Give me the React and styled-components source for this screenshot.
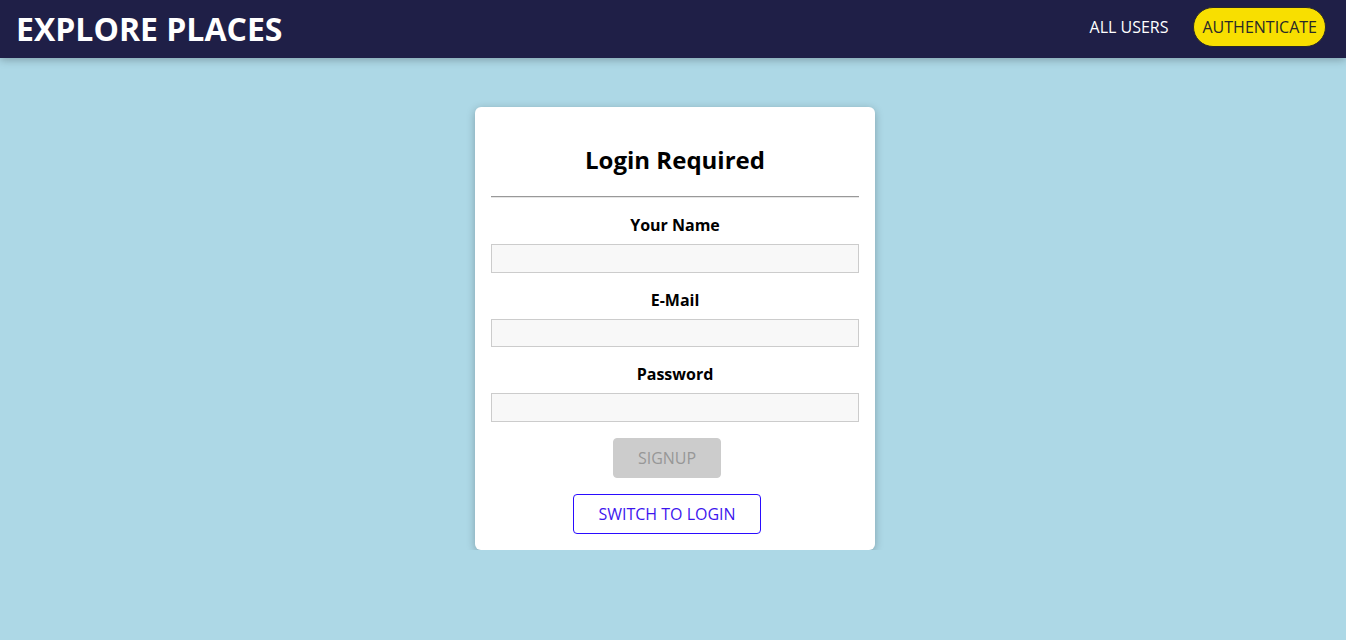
import styled, { createGlobalStyle } from "styled-components"

const GlobalStyle = createGlobalStyle`
  * { box-sizing: border-box; }
  html, body {
    margin: 0;
    font-family: "Open Sans", sans-serif;
    background: #add8e6;
  }
`

export default function App() {
  return (
    <>
      <GlobalStyle />
      <Header>
        <Title>EXPLORE PLACES</Title>
        <NavList>
          <NavItem><NavLink href="#">ALL USERS</NavLink></NavItem>
          <NavItem><NavLink href="#" $active>AUTHENTICATE</NavLink></NavItem>
        </NavList>
      </Header>
      <Main>
        <Card>
          <CardTitle>Login Required</CardTitle>
          <Divider />
          <Form onSubmit={(e) => e.preventDefault()}>
            <Field>
              <Label htmlFor="name">Your Name</Label>
              <Input id="name" type="text" />
            </Field>
            <Field>
              <Label htmlFor="email">E-Mail</Label>
              <Input id="email" type="email" />
            </Field>
            <Field>
              <Label htmlFor="password">Password</Label>
              <Input id="password" type="password" />
            </Field>
            <Button type="submit" disabled>SIGNUP</Button>
          </Form>
          <Button $inverse>SWITCH TO LOGIN</Button>
        </Card>
      </Main>
    </>
  )
}

const Header = styled.header`
  height: 58px;
  display: flex;
  align-items: center;
  justify-content: space-between;
  padding: 0 12px 0 16px;
  background: #1f1f47;
  box-shadow: 0 2px 8px rgba(0, 0, 0, 0.26);
  position: relative;
  z-index: 5;
`
const Title = styled.h1`
  margin: 0;
  color: #fff;
  font-size: 32px;
  font-weight: 700;
  line-height: 1.2;
`
const NavList = styled.ul`
  list-style: none;
  margin: -4px 0 0;
  padding: 0;
  display: flex;
  align-items: center;
`
const NavItem = styled.li`
  margin: 0 8px;
`
const NavLink = styled.a`
  display: block;
  padding: 8px;
  font-size: 16px;
  line-height: 22px;
  text-decoration: none;
  border: 1px solid ${(p) => (p.$active ? "#292929" : "transparent")};
  border-radius: 20px;
  background: ${(p) => (p.$active ? "#f8df00" : "transparent")};
  color: ${(p) => (p.$active ? "#292929" : "#fff")};
`
const Main = styled.main`
  padding: 49px 0 0 4px;
`
const Card = styled.div`
  width: 400px;
  margin: 0 auto;
  padding: 16px;
  background: #fff;
  border-radius: 6px;
  box-shadow: 0 2px 8px rgba(0, 0, 0, 0.26);
  display: flex;
  flex-direction: column;
  align-items: center;
  text-align: center;
`
const CardTitle = styled.h2`
  margin: 20px 0 0;
  font-size: 24px;
  font-weight: 700;
  line-height: 33px;
  color: #000;
`
const Divider = styled.hr`
  width: 100%;
  margin: 20px 0 0;
  border: none;
  border-top: 1px solid #999;
  border-bottom: 1px solid #e6e6e6;
`
const Form = styled.form`
  width: 100%;
  display: flex;
  flex-direction: column;
  align-items: center;
  margin-bottom: 16px;
`
const Field = styled.div`
  width: 100%;
  margin-top: 16px;
`
const Label = styled.label`
  display: block;
  margin-bottom: 8px;
  font-size: 16px;
  font-weight: 700;
  line-height: 22px;
  color: #000;
`
const Input = styled.input`
  display: block;
  width: 100%;
  height: 28.6px;
  font: inherit;
  border: 1px solid #ccc;
  background: #f8f8f8;
  padding: 2px 4px;
  outline: none;
`
const Button = styled.button`
  margin-top: ${(p) => (p.$inverse ? "0" : "16px")};
  margin-right: 16px;
  padding: 8px 24px;
  font: inherit;
  font-size: 16px;
  line-height: 22px;
  border-radius: 4px;
  cursor: pointer;
  border: 1px solid ${(p) => (p.$inverse ? "#2a0cff" : "#ff0055")};
  background: ${(p) => (p.$inverse ? "transparent" : "#ff0055")};
  color: ${(p) => (p.$inverse ? "#3d16ee" : "#fff")};
  &:disabled {
    background: #ccc;
    color: #979797;
    border-color: #ccc;
    cursor: not-allowed;
  }
`
